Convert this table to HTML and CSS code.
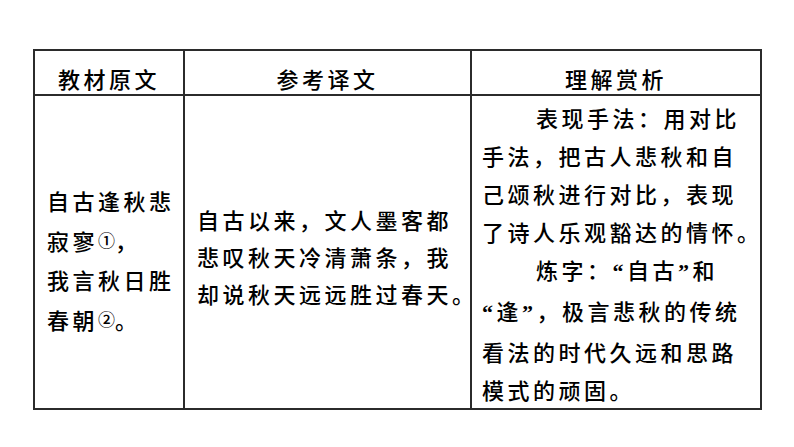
FILE: index.html
```html
<!DOCTYPE html>
<html lang="zh-CN">
<head>
<meta charset="utf-8">
<link rel="stylesheet" href="styles.css">
</head>
<body>
<table class="grid">
  <colgroup><col class="c1"><col class="c2"><col class="c3"></colgroup>
  <thead>
    <tr><th>教材原文</th><th>参考译文</th><th>理解赏析</th></tr>
  </thead>
  <tbody>
    <tr>
      <td class="orig">自古逢秋悲<br>寂寥<span class="note">①</span>，<br>我言秋日胜<br>春朝<span class="note">②</span>。</td>
      <td class="trans">自古以来，文人墨客都<br>悲叹秋天冷清萧条，我<br>却说秋天远远胜过春天。</td>
      <td class="anal"><p class="para">表现手法：用对比<br>手法，把古人悲秋和自<br>己颂秋进行对比，表现<br>了诗人乐观豁达的情怀。</p><p class="para">炼字：<span class="q">“</span>自古<span class="q">”</span>和<br><span class="q">“</span>逢<span class="q">”</span>，极言悲秋的传统<br>看法的时代久远和思路<br>模式的顽固。</p></td>
    </tr>
  </tbody>
</table>
</body>
</html>
```

FILE: styles.css
```css
body {
  margin: 0;
  background: #fff;
  color: #000;
  font-family: "Noto Sans CJK SC", sans-serif;
}
.grid {
  margin: 49px 0 0 33px;
  border-collapse: collapse;
  table-layout: fixed;
  width: 727px;
}
.c1 { width: 150px; }
.c2 { width: 287px; }
.c3 { width: 290px; }
.grid th,
.grid td {
  border: 2px solid #2b2b2b;
  padding: 0;
  font-size: 22px;
  font-weight: 500;
  letter-spacing: 3.5px;
  white-space: nowrap;
}
.grid th {
  height: 45px;
  text-align: center;
  vertical-align: middle;
  padding-top: 10px;
  box-sizing: border-box;
}
.grid td {
  height: 313px;
  box-sizing: border-box;
}
.orig {
  vertical-align: middle;
  padding: 16px 0 0 12px !important;
  line-height: 39.5px;
}
.trans {
  vertical-align: middle;
  padding: 9px 0 0 12px !important;
  line-height: 37px;
}
.anal {
  vertical-align: top;
  padding: 2px 0 0 10px !important;
  line-height: 38px;
}
.para {
  margin: 0;
  text-indent: 54px;
}
.note {
  font-size: 17px;
  letter-spacing: 0;
  vertical-align: 3px;
  line-height: 1;
}
.q {
  font-family: "Liberation Serif", serif;
  font-weight: bold;
}
```
